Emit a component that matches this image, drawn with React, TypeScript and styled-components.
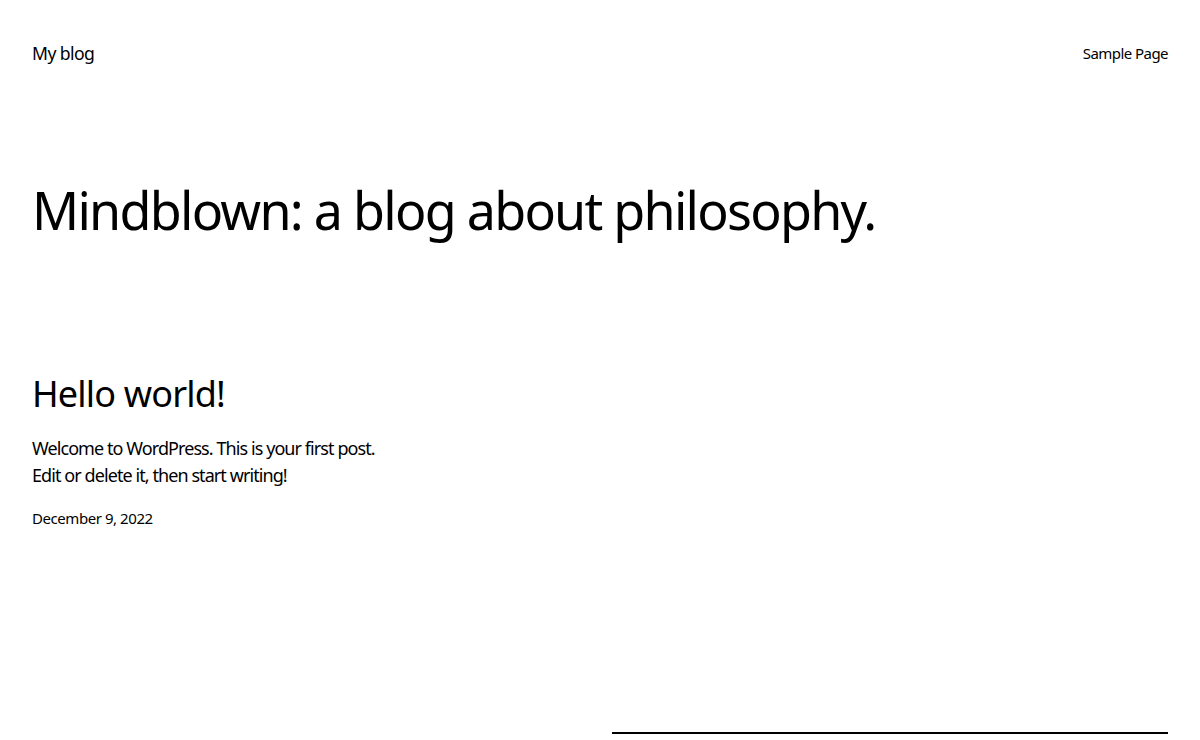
import styled, { createGlobalStyle } from "styled-components"

const GlobalStyle = createGlobalStyle`
    html, body {
        margin: 0;
        padding: 0;
        background: #ffffff;
    }
    body {
        font-family: "Noto Sans", "Open Sans", sans-serif;
        color: #000000;
        -webkit-font-smoothing: antialiased;
    }
`

// ── Layout ────────────────────────────────────────────────────────────────────

const Page = styled.div`
    display: flex;
    flex-direction: column;
    padding: 0 32px;
    min-height: 740px;
    box-sizing: border-box;
`

const Header = styled.header`
    display: flex;
    justify-content: space-between;
    align-items: center;
    padding-top: 40px;
    height: 26px;
`

const SiteTitle = styled.a`
    font-size: 17.6px;
    line-height: 26px;
    letter-spacing: -0.57px;
    color: inherit;
    text-decoration: none;
`

const NavLink = styled.a`
    font-size: 15px;
    line-height: 26px;
    letter-spacing: -0.55px;
    color: inherit;
    text-decoration: none;
`

const Headline = styled.h1`
    margin: 113px 0 0;
    font-size: 52px;
    font-weight: 400;
    line-height: 62px;
    letter-spacing: -1.74px;
`

const Post = styled.article`
    display: flex;
    flex-direction: column;
    margin-top: 131px;
`

const PostTitle = styled.h2`
    margin: 0;
    font-size: 36px;
    font-weight: 400;
    line-height: 43px;
    letter-spacing: -0.83px;
`

const Excerpt = styled.p`
    margin: 20px 0 0;
    font-size: 18px;
    line-height: 27px;
    letter-spacing: -0.92px;
`

const PostDate = styled.time`
    margin-top: 18px;
    font-size: 15px;
    line-height: 22.5px;
    letter-spacing: -0.44px;
`

const Separator = styled.hr<{ $offset: number }>`
    align-self: flex-end;
    width: 556px;
    margin: ${({ $offset }) => $offset}px 0 0;
    border: none;
    border-top: 2px solid #000000;
`

export default function App() {
    return (
        <>
            <GlobalStyle />
            <Page>
                <Header>
                    <SiteTitle href="#">My blog</SiteTitle>
                    <NavLink href="#">Sample Page</NavLink>
                </Header>
                <Headline>Mindblown: a blog about philosophy.</Headline>
                <Post>
                    <PostTitle>Hello world!</PostTitle>
                    <Excerpt>
                        Welcome to WordPress. This is your first post.
                        <br />
                        Edit or delete it, then start writing!
                    </Excerpt>
                    <PostDate dateTime="2022-12-09">December 9, 2022</PostDate>
                </Post>
                <Separator $offset={202} />
            </Page>
        </>
    )
}
